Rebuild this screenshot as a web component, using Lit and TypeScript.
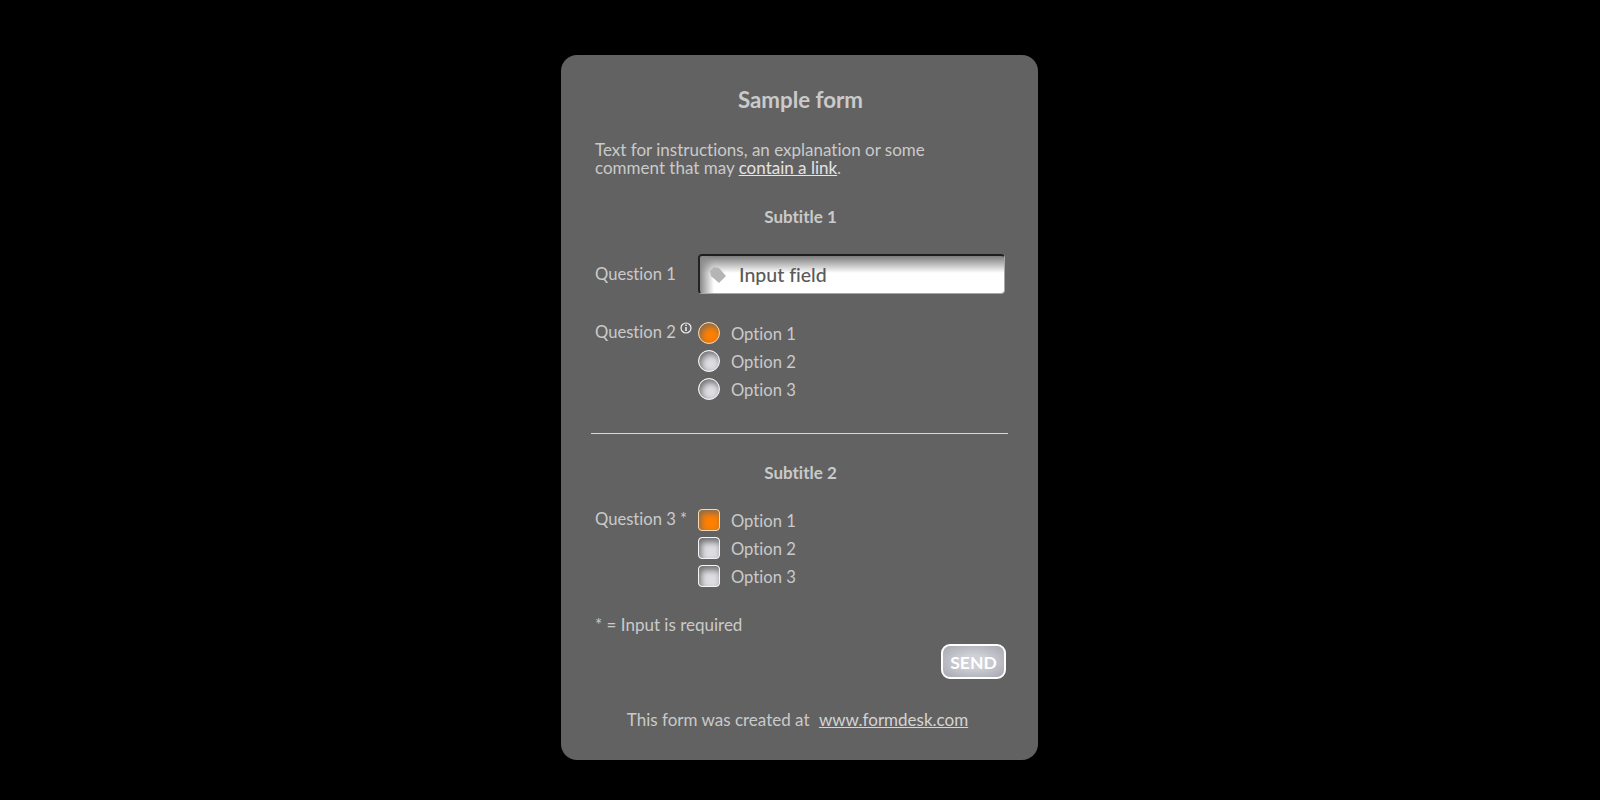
import { LitElement, css, html } from "lit";
import { customElement } from "lit/decorators.js";

@customElement("app-root")
export class AppRoot extends LitElement {
  static styles = css`
    :host {
      display: flex;
      justify-content: center;
      align-items: flex-start;
      width: 100%;
      height: 800px;
      background: #000;
      font-family: Lato, "Noto Sans", sans-serif;
      font-size: 17px;
      font-variant-ligatures: none;
      color: #cacaca;
    }
    .card {
      box-sizing: border-box;
      width: 477px;
      height: 705px;
      margin: 55px 1px 0 0;
      padding: 0 32px 0 34px;
      background: #626262;
      border-radius: 16px;
    }
    h1 {
      margin: 32px 0 0;
      height: 26px;
      line-height: 26px;
      font-size: 22.3px;
      font-weight: 700;
      text-align: center;
    }
    .intro {
      margin: 28px 0 0;
      line-height: 18px;
    }
    a {
      color: #e4e4e4;
      text-decoration: underline;
    }
    h2 {
      margin: 0;
      height: 20px;
      line-height: 20px;
      font-size: 17px;
      font-weight: 700;
      text-align: center;
    }
    .sub1 {
      margin-top: 30px;
    }
    .row {
      display: flex;
    }
    .label {
      width: 103px;
      flex: none;
      font-size: 16.6px;
      white-space: nowrap;
    }
    .q1 {
      margin-top: 27px;
      align-items: center;
    }
    .field {
      box-sizing: border-box;
      display: flex;
      align-items: center;
      gap: 12px;
      width: 307px;
      height: 40px;
      padding-left: 9px;
      border: 1px solid #a8a8a8;
      border-top: 2px solid #1e1e1e;
      border-left: 2px solid #222;
      border-radius: 4px;
      color: #5a5a5a;
      font-size: 19.5px;
      font-weight: 500;
      background:
        linear-gradient(to right, #8a8a8a 0, rgba(255, 255, 255, 0) 14px),
        linear-gradient(to bottom, #7c7c7c 0, #fff 17px);
    }
    .q2 {
      margin-top: 28px;
    }
    .q2 .label,
    .q3 .label {
      line-height: 20px;
    }
    .info {
      vertical-align: 4px;
    }
    .options {
      display: flex;
      flex-direction: column;
      gap: 6px;
      font-size: 16.6px;
    }
    .option {
      display: flex;
      align-items: center;
      gap: 11px;
      height: 22px;
    }
    .option span:last-child {
      padding-top: 2px;
    }
    .mark {
      box-sizing: border-box;
      width: 22px;
      height: 22px;
      border: 1px solid #f4f4f4;
      background: #dedee2;
      box-shadow: inset 2px 3px 6px #6d6d70;
    }
    .radio {
      border-radius: 50%;
    }
    .check {
      border-radius: 4px;
      box-shadow: inset 2px 4px 6px #6d6d70;
    }
    .mark.on {
      border-color: #f5d9b0;
      background: #ff7f00;
      box-shadow: inset 2px 3px 6px #7f6a55;
    }
    hr {
      margin: 33px -2px 0 -4px;
      height: 1px;
      border: 0;
      background: #d8d8d8;
    }
    .sub2 {
      margin-top: 29px;
    }
    .q3 {
      margin-top: 26px;
    }
    .required {
      margin-top: 28px;
      line-height: 20px;
    }
    .actions {
      display: flex;
      justify-content: flex-end;
      margin-top: 9px;
    }
    button {
      box-sizing: border-box;
      width: 65px;
      height: 35px;
      padding: 1px 0 0;
      border: 2px solid #fff;
      border-radius: 9px;
      background: radial-gradient(ellipse at center, #cfcfd6 30%, #a6a6b0 100%);
      color: #fff;
      font: 700 17.5px Lato, "Noto Sans", sans-serif;
    }
    .footer {
      margin-top: 31px;
      padding-right: 6px;
      line-height: 20px;
      text-align: center;
    }
    .footer a {
      color: #d4d4d4;
      margin-left: 5px;
    }
  `;

  optionList(kind: string) {
    return html`
      <div class="options">
        ${["Option 1", "Option 2", "Option 3"].map(
          (name, i) => html`
            <div class="option">
              <span class="mark ${kind} ${i === 0 ? "on" : ""}"></span>
              <span>${name}</span>
            </div>
          `
        )}
      </div>
    `;
  }

  render() {
    return html`
      <main class="card">
        <h1>Sample form</h1>
        <p class="intro">
          Text for instructions, an explanation or some<br />
          comment that may <a href="#">contain a link</a>.
        </p>
        <h2 class="sub1">Subtitle 1</h2>
        <div class="row q1">
          <span class="label">Question 1</span>
          <div class="field">
            <svg width="18" height="18" viewBox="0 0 18 18">
              <path d="M1 5 L5 1 L10 2 L17 10 L10 17 L2 10 Z" fill="#b5b5b5" />
            </svg>
            <span>Input field</span>
          </div>
        </div>
        <div class="row q2">
          <span class="label">
            Question 2
            <svg class="info" width="12" height="12" viewBox="0 0 12 12">
              <circle cx="6" cy="6" r="5" fill="none" stroke="#f2f2f2" stroke-width="1.2" />
              <path d="M6 5v4M6 2.6v1.4" stroke="#f2f2f2" stroke-width="1.5" />
            </svg>
          </span>
          ${this.optionList("radio")}
        </div>
        <hr />
        <h2 class="sub2">Subtitle 2</h2>
        <div class="row q3">
          <span class="label">Question 3 *</span>
          ${this.optionList("check")}
        </div>
        <div class="required">* = Input is required</div>
        <div class="actions"><button>SEND</button></div>
        <div class="footer">
          This form was created at <a href="#">www.formdesk.com</a>
        </div>
      </main>
    `;
  }
}
